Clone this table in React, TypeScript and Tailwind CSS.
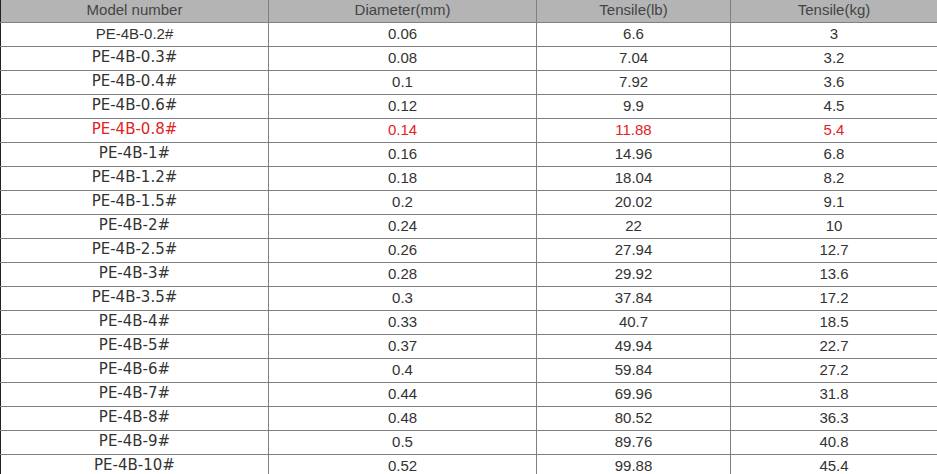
const rows: [string, string, string, string][] = [
  ["PE-4B-0.2#", "0.06", "6.6", "3"],
  ["PE-4B-0.3#", "0.08", "7.04", "3.2"],
  ["PE-4B-0.4#", "0.1", "7.92", "3.6"],
  ["PE-4B-0.6#", "0.12", "9.9", "4.5"],
  ["PE-4B-0.8#", "0.14", "11.88", "5.4"],
  ["PE-4B-1#", "0.16", "14.96", "6.8"],
  ["PE-4B-1.2#", "0.18", "18.04", "8.2"],
  ["PE-4B-1.5#", "0.2", "20.02", "9.1"],
  ["PE-4B-2#", "0.24", "22", "10"],
  ["PE-4B-2.5#", "0.26", "27.94", "12.7"],
  ["PE-4B-3#", "0.28", "29.92", "13.6"],
  ["PE-4B-3.5#", "0.3", "37.84", "17.2"],
  ["PE-4B-4#", "0.33", "40.7", "18.5"],
  ["PE-4B-5#", "0.37", "49.94", "22.7"],
  ["PE-4B-6#", "0.4", "59.84", "27.2"],
  ["PE-4B-7#", "0.44", "69.96", "31.8"],
  ["PE-4B-8#", "0.48", "80.52", "36.3"],
  ["PE-4B-9#", "0.5", "89.76", "40.8"],
  ["PE-4B-10#", "0.52", "99.88", "45.4"],
];

const headers = ["Model number", "Diameter(mm)", "Tensile(lb)", "Tensile(kg)"];

export default function App() {
  return (
    <div className="w-[937px] h-[474px] overflow-hidden bg-white font-['Liberation_Sans',Arial,sans-serif] text-[15px]">
      <table className="w-[937px] table-fixed border-collapse">
        <colgroup>
          <col className="w-[268px]" />
          <col className="w-[268px]" />
          <col className="w-[194px]" />
          <col className="w-[207px]" />
        </colgroup>
        <thead>
          <tr className="h-[22px] bg-[#b4b4b4] text-[#444]">
            {headers.map((h, i) => (
              <th
                key={h}
                className={`p-0 pb-[2px] font-normal text-center leading-[19px] border-b border-r border-[#808080] ${
                  i === 0 ? "border-l border-l-[#222]" : ""
                } ${i === 3 ? "border-r-[#222]" : ""}`}
              >
                {h}
              </th>
            ))}
          </tr>
        </thead>
        <tbody>
          {rows.map((r, ri) => {
            const red = r[0] === "PE-4B-0.8#";
            return (
              <tr key={r[0]} className={`h-[24px] ${red ? "text-[#e32222]" : "text-[#333]"}`}>
                {r.map((c, i) => (
                  <td
                    key={i}
                    className={`p-0 pb-[2px] text-center leading-[21px] border-b border-r border-[#808080] ${
                      i === 0 ? "border-l border-l-[#222]" : ""
                    } ${i === 3 ? "border-r-[#222]" : ""} ${
                      i === 0 && ri > 0 ? "font-['DejaVu_Sans',Verdana,sans-serif]" : ""
                    }`}
                  >
                    {c}
                  </td>
                ))}
              </tr>
            );
          })}
        </tbody>
      </table>
    </div>
  );
}
